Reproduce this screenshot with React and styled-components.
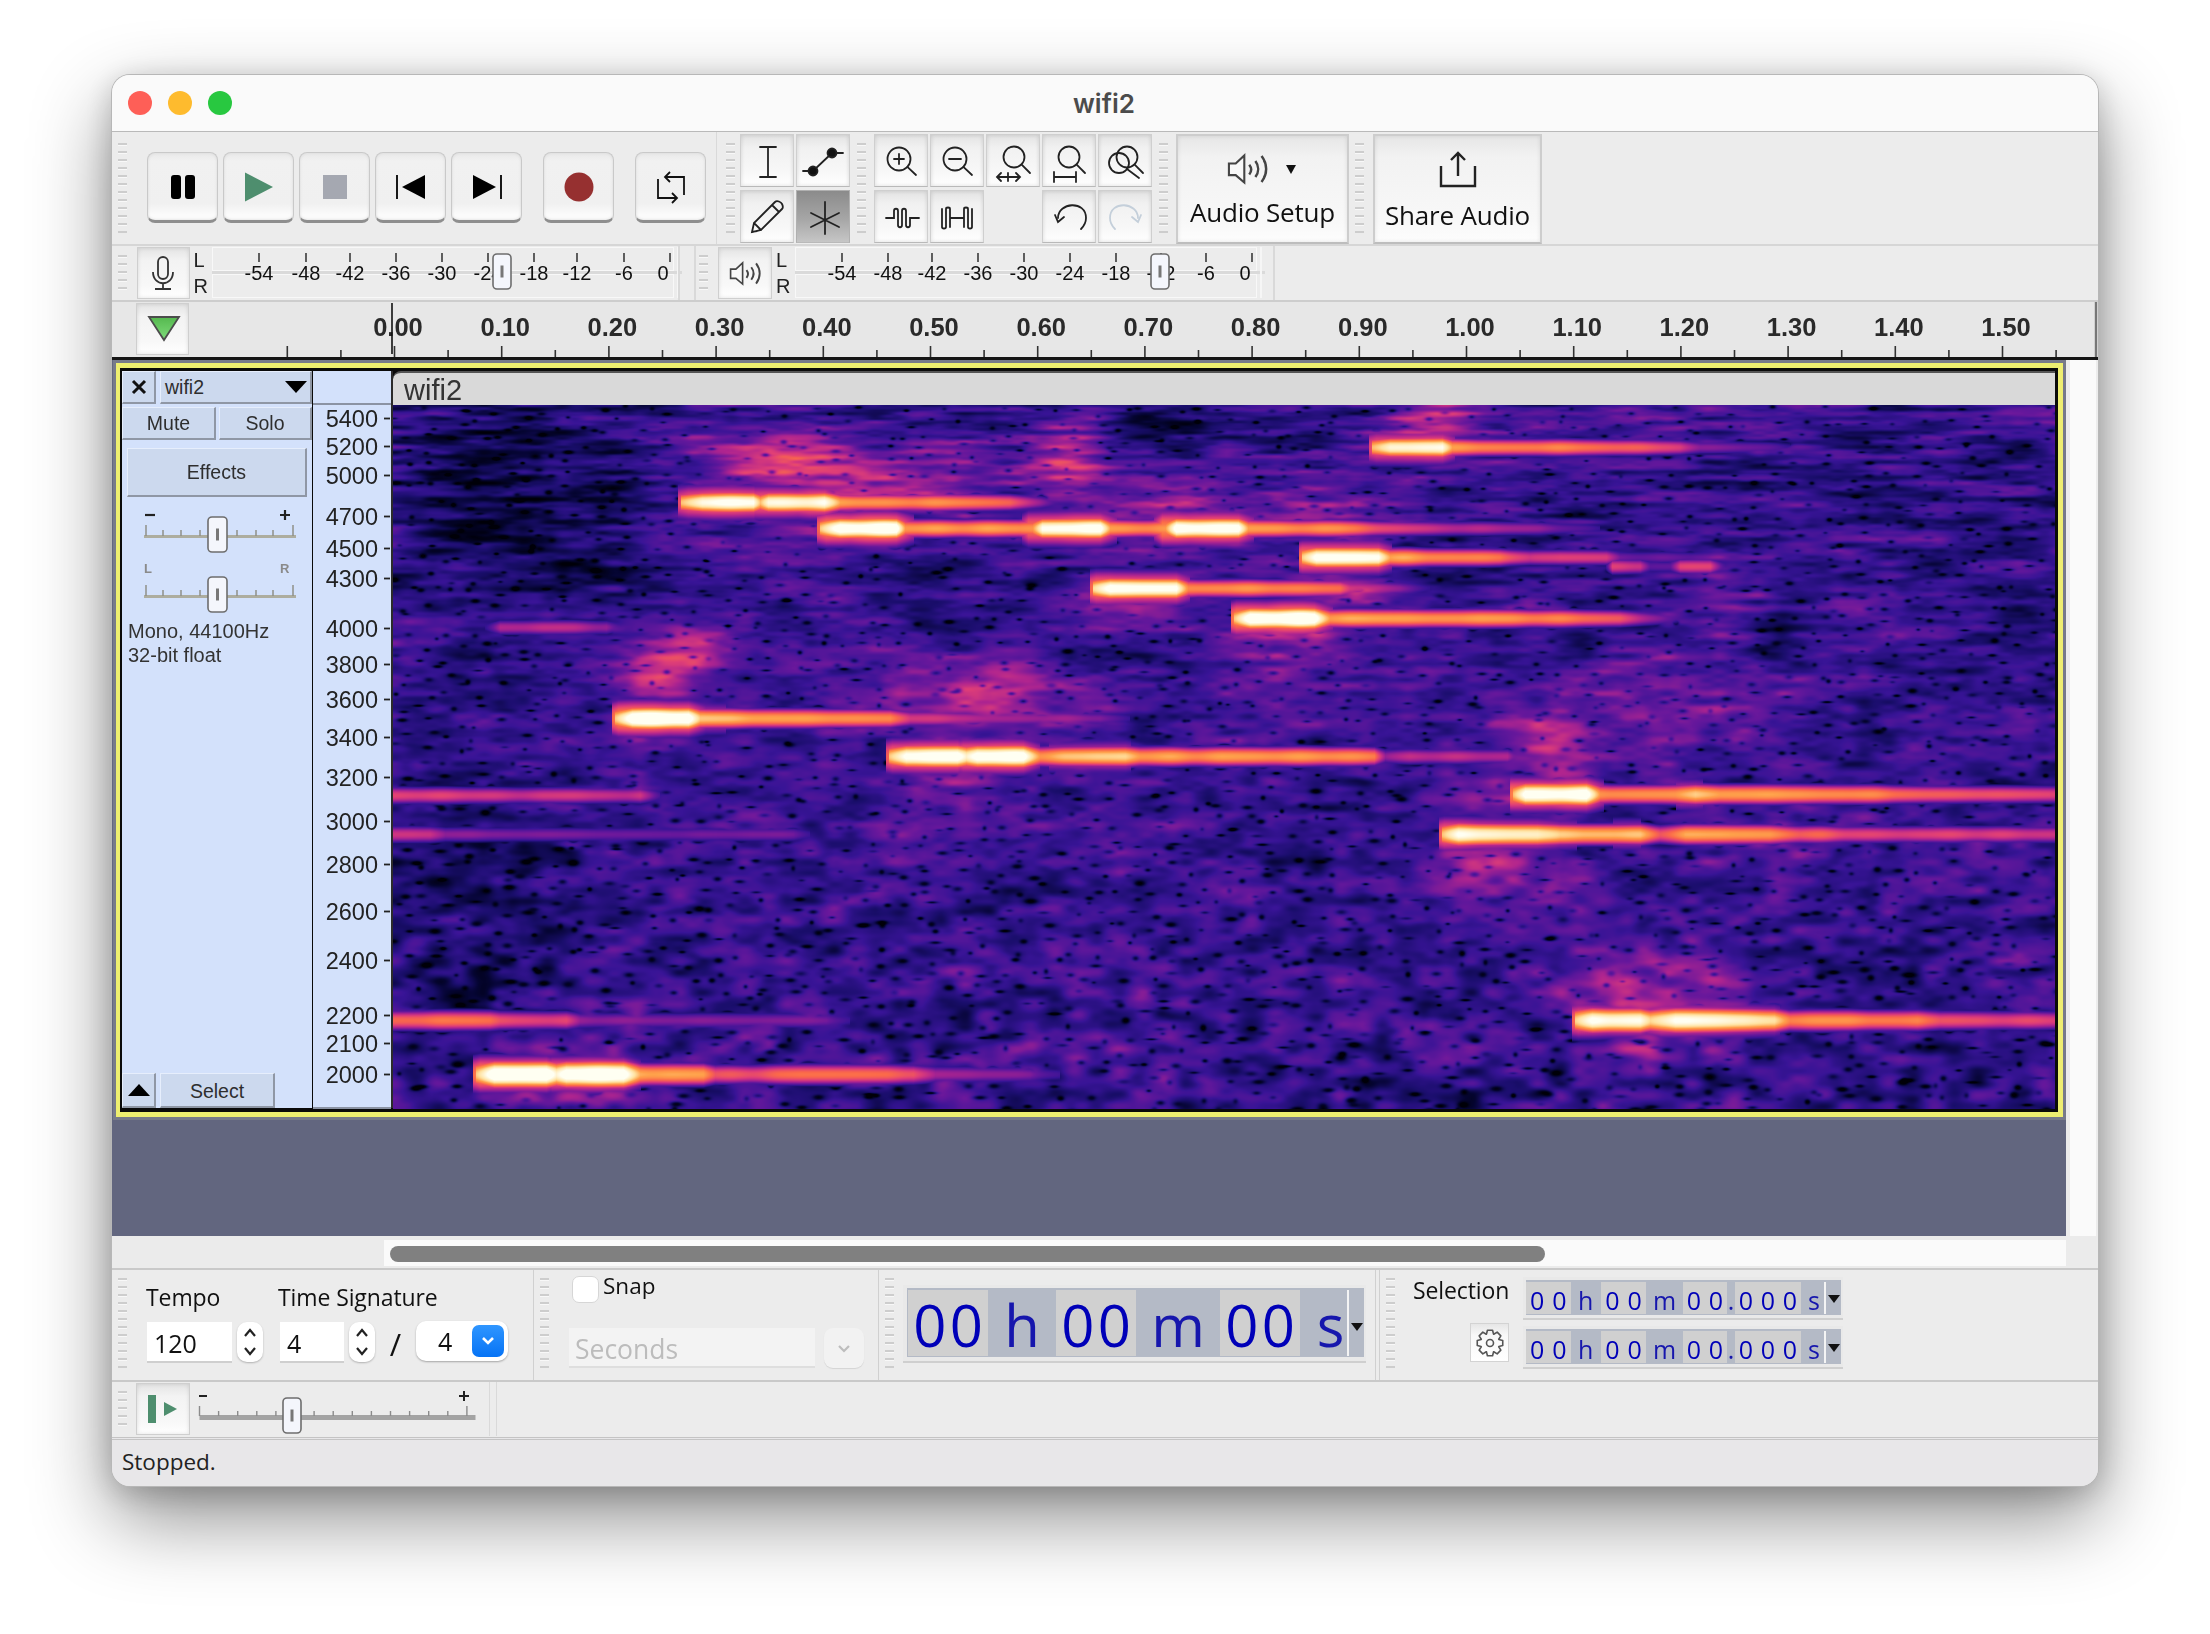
import React, { useEffect, useRef } from "react";
import styled, { createGlobalStyle } from "styled-components";

const Global = createGlobalStyle`
  html, body { margin: 0; background: #fff; }
  #root { width: 2210px; height: 1634px; overflow: hidden; }
  * { box-sizing: border-box; }
`;
const UI = `"Open Sans", "Noto Sans", sans-serif`;
const AR = `"Liberation Sans", Arial, sans-serif`;

const Page = styled.div`width:2210px;height:1634px;padding:75px 112px;background:#fff;`;
const Win = styled.div`
  width:1986px;height:1411px;border-radius:18px;overflow:hidden;display:flex;flex-direction:column;background:#ececec;
  box-shadow:0 0 0 1px #b7b7b7,0 32px 80px rgba(0,0,0,.45),0 6px 30px rgba(0,0,0,.2);
  filter:blur(.4px);
`;
const TitleBar = styled.div`height:57px;flex:none;background:#fafafa;border-bottom:1px solid #b9b9b9;display:grid;grid-template-columns:1fr auto 1fr;align-items:center;padding-left:16px;`;
const Lights = styled.div`display:flex;gap:16px;`;
const Light = styled.span`width:24px;height:24px;border-radius:50%;background:${p=>p.$c};`;
const Title = styled.div`font:600 26px Inter,${AR};color:#4b4b4b;margin-right:18px;`;

const Grip = styled.div`
  width:9px;height:${p=>p.$h}px;margin:${p=>p.$m};flex:none;
  background:repeating-linear-gradient(to bottom,#cdcdcd 0,#cdcdcd 2px,#f8f8f8 2px,#f8f8f8 3px,transparent 3px,transparent 8px);
`;
const Row1 = styled.div`height:112px;flex:none;display:flex;`;
const Transport = styled.div`width:605px;flex:none;display:flex;border-right:1px solid #d9d9d9;`;
const TransportBtns = styled.div`display:flex;gap:5px;margin:20px 0 0 20px;align-items:flex-start;`;
const TBtn = styled.div`
  width:71px;height:71px;flex:none;border-radius:8px;display:flex;align-items:center;justify-content:center;
  margin-left:${p=>p.$ml||0}px;
  background:linear-gradient(#e9e9e9,#f1f1f1 12%,#f0f0f0 75%,#fbfbfb 92%);
  border:1.5px solid #c9c9c9;border-bottom:3px solid #8e8e8e;box-shadow:inset 0 0 3px #d8d8d8;
`;
const ToolGrid = styled.div`display:grid;grid-template-columns:repeat(${p=>p.$cols},54px);grid-auto-rows:53px;gap:3px 2px;margin:2px 0 0 ${p=>p.$ml}px;flex:none;`;
const ToolBtn = styled.div`
  display:flex;align-items:center;justify-content:center;
  background:${p=>p.$on?"linear-gradient(#8b8b8b,#a6a6a6 55%,#c6c6c6)":"linear-gradient(#e3e3e3,#f1f1f1 25%,#f8f8f8 75%,#fff)"};
  border:1.5px solid ${p=>p.$on?"#b0b0b0":"#cfcfcf"};border-bottom-color:#b9b9b9;
  box-shadow:${p=>p.$on?"none":"inset 0 0 4px rgba(0,0,0,.14)"};
`;
const BigBtn = styled.div`
  width:${p=>p.$w}px;height:110px;margin:2px 0 0 ${p=>p.$ml}px;flex:none;display:flex;flex-direction:column;align-items:center;
  background:linear-gradient(#e6e6e6,#f2f2f2 20%,#f8f8f8 80%,#fdfdfd);border:2px solid #cdcdcd;border-bottom-color:#bdbdbd;
  box-shadow:inset 0 0 4px rgba(0,0,0,.1);
  font:400 26px ${UI};color:#111;padding-top:${p=>p.$pt}px;
`;
const BigLabel = styled.div`line-height:30px;margin-top:${p=>p.$mt}px;white-space:nowrap;letter-spacing:-.2px;`;
const IconLine = styled.div`display:flex;align-items:center;gap:17px;margin-left:-2px;`;
const MiniDown = styled.span`width:0;height:0;border:5.5px solid transparent;border-top:9px solid #111;border-bottom:0;`;

const Row2 = styled.div`height:56px;flex:none;display:flex;border-top:2px solid #d6d6d6;`;
const SquareBtn = styled.div`
  width:${p=>p.$w||53}px;height:52px;flex:none;margin:1px 0 0 ${p=>p.$ml}px;display:flex;align-items:center;justify-content:center;
  background:linear-gradient(#e4e4e4,#f3f3f3 25%,#f8f8f8 75%,#fff);border:1.5px solid #cfcfcf;box-shadow:inset 0 0 4px rgba(0,0,0,.12);
`;
const LR = styled.div`width:${p=>p.$w}px;flex:none;height:50px;margin-top:2px;padding-left:4px;display:flex;flex-direction:column;justify-content:space-between;font:20px/24px ${AR};color:#222;`;
const Sep = styled.div`width:${p=>p.$w||2}px;height:54px;flex:none;margin-left:${p=>p.$ml}px;background:#d9d9d9;`;
const Svg = styled.svg`display:block;flex:none;overflow:visible;margin:${p=>p.$m||0};`;
const MeterSlot = styled.div`width:462px;height:51px;flex:none;margin-top:1px;`;

const RulerRow = styled.div`height:60px;flex:none;display:flex;background:#e7e7e7;border-top:2px solid #cdcdcd;border-bottom:3px solid #151515;`;

const TrackZone = styled.div`height:876px;flex:none;display:flex;background:#ececec;`;
const TrackBg = styled.div`width:1954px;flex:none;background:#62667f;padding-left:1px;`;
const TrackStrip = styled.div`width:26px;flex:none;margin-left:4px;background:#fafafa;`;
const FrameGray = styled.div`width:1953px;height:760px;border:3px solid #777a8a;`;
const FrameYellow = styled.div`height:100%;border:solid #eeee70;border-width:5px 5px 5px 4px;`;
const FrameInner = styled.div`height:100%;background:#0a0a0a;padding:3px 3px 4px 2px;display:flex;`;
const Panel = styled.div`width:190px;flex:none;background:#d3e1fb;display:flex;flex-direction:column;color:#333;font-family:${AR};`;
const PanelRow = styled.div`display:flex;margin-top:${p=>p.$mt||0}px;gap:${p=>p.$gap||0}px;flex:none;`;
const PBtn = styled.div`
  width:${p=>p.$w}px;height:${p=>p.$h||33}px;flex:none;display:flex;align-items:center;justify-content:${p=>p.$left?"space-between":"center"};
  padding:${p=>p.$left?"0 3px 0 4px":`${p.$pt||0}px 0 0`};background:#ccd9ee;font-size:19.5px;color:#2e2e2e;
  border:1px solid #e6eefc;border-right:2px solid #8f97a5;border-bottom:2px solid #8f97a5;
`;
const Effects = styled.div`
  width:180px;height:49px;margin:8px 0 0 5px;flex:none;display:flex;align-items:center;justify-content:center;background:#ccd9ee;
  font-size:19.5px;color:#2e2e2e;border:1px solid #e6eefc;border-right:2px solid #8f97a5;border-bottom:2px solid #8f97a5;
`;
const Info = styled.div`font-size:20px;line-height:24px;margin:2px 0 0 6px;color:#333;`;
const Fill = styled.div`flex:1;`;
const VRuler = styled.div`width:80px;flex:none;margin-left:1px;background:#d3e1fb;border-right:2px solid #2b2b2b;`;
const SpecCol = styled.div`flex:1;display:flex;flex-direction:column;`;
const SpecTitle = styled.div`height:34px;flex:none;background:#d9d9d9;border-top:2px solid #555;border-top-left-radius:8px;font:29px/35px ${AR};color:#333;padding-left:11px;`;
const Spec = styled.canvas`display:block;width:1662px;height:704px;`;

const ScrollRow = styled.div`height:32px;flex:none;background:#ebebeb;padding:4px 0 0 272px;`;
const ScrollTrack = styled.div`width:1682px;height:26px;background:#fafafa;padding:6px;`;
const ScrollThumb = styled.div`width:1155px;height:16px;border-radius:8px;background:#808080;`;

const Bottom1 = styled.div`height:112px;flex:none;display:flex;border-top:2px solid #c9c9c9;font-family:${UI};color:#111;`;
const Sect = styled.section`width:${p=>p.$w}px;flex:none;display:flex;border-right:${p=>p.$nob?"0":"1px solid #d0d0d0"};border-left:${p=>p.$bl?"1px solid #d0d0d0":"0"};margin-left:${p=>p.$ml||0}px;`;
const Col = styled.div`display:flex;flex-direction:column;width:${p=>p.$w?p.$w+"px":"auto"};margin:${p=>p.$m||0};flex:none;`;
const Lbl = styled.div`font-size:23px;line-height:28px;white-space:nowrap;letter-spacing:-.1px;margin-top:-1px;`;
const Ctl = styled.div`display:flex;align-items:flex-start;margin-top:11px;font-size:25px;`;
const NumInput = styled.div`width:${p=>p.$w}px;height:41px;margin-left:${p=>p.$ml}px;background:#fff;border-bottom:2px solid #cfcfcf;padding-left:7px;line-height:42px;flex:none;`;
const Stepper = styled.div`width:26px;height:40px;margin-left:5px;border-radius:10px;background:#fff;box-shadow:0 1px 2px rgba(0,0,0,.25);flex:none;display:flex;align-items:center;justify-content:center;`;
const Slash = styled.div`width:41px;text-align:center;font-size:31px;line-height:44px;flex:none;`;
const SelectBox = styled.div`width:92px;height:40px;border-radius:10px;background:#fff;box-shadow:0 1px 2px rgba(0,0,0,.3);display:flex;align-items:center;padding:0 4px 0 22px;justify-content:space-between;margin-top:-1px;`;
const BlueBtn = styled.div`width:32px;height:32px;border-radius:7px;background:linear-gradient(#2f96ff,#0673f5);display:flex;align-items:center;justify-content:center;`;
const SnapRow = styled.div`display:flex;margin:6px 0 0 3px;gap:4px;height:27px;`;
const Check = styled.div`width:27px;height:27px;border-radius:7px;background:#fff;border:1px solid #d6d6d6;`;
const SnapLbl = styled.div`font-size:22.5px;line-height:20px;`;
const SecRow = styled.div`display:flex;margin-top:25px;gap:9px;`;
const SecBox = styled.div`width:246px;height:40px;background:#f3f3f3;border-bottom:2px solid #dedede;color:#bcbcbc;font-size:26.5px;line-height:43px;padding-left:6px;`;
const SecBtn = styled.div`width:40px;height:40px;border-radius:9px;background:#f2f2f2;box-shadow:0 1px 1px rgba(0,0,0,.1);display:flex;align-items:center;justify-content:center;`;

const TimeOuter = styled.div`
  width:${p=>p.$big?463:320}px;height:${p=>p.$big?78:43}px;background:#e9e9e9;flex:none;
  padding:${p=>p.$big?"3px 2px 4px 4px":"3px 2px 3px 3px"};border-bottom:2px solid #cfcfcf;margin:${p=>p.$m||0};
`;
const TimeInner = styled.div`height:100%;background:#b4bac6;display:flex;padding:2px 0 1px ${p=>p.$big?1:0}px;`;
const Cell = styled.div`width:${p=>p.$w}px;flex:none;display:flex;align-items:center;justify-content:center;background:${p=>p.$unit?"transparent":"#d0d0d0"};padding-left:${p=>p.$pad||0}px;padding-top:${p=>p.$big?3:4}px;`;
const Digit = styled.span`display:block;width:${p=>p.$big?36.5:22.3}px;text-align:center;font:${p=>p.$big?500:400} ${p=>p.$big?58:25}px/1 ${UI};color:#0000b8;`;
const Unit = styled.span`font:${p=>p.$big?500:400} ${p=>p.$big?58:25}px/1 ${UI};color:#1616ad;`;
const TimeEdge = styled.div`width:2px;flex:none;background:#f4f4f4;`;
const TimeDrop = styled.div`flex:1;display:flex;justify-content:center;padding-top:${p=>p.$big?33:13}px;`;
const Caret = styled.span`width:0;height:0;border:${p=>p.$big?"6.5px":"6px"} solid transparent;border-top:8px solid #111;border-bottom:0;`;
const GearBtn = styled.div`width:39px;height:39px;margin:19px 0 0 57px;background:linear-gradient(#e6e6e6,#f8f8f8 30%,#fff);border:1.5px solid #d3d3d3;display:flex;align-items:center;justify-content:center;`;

const Bottom2 = styled.div`height:57px;flex:none;display:flex;border-top:2px solid #c9c9c9;`;
const Status = styled.div`height:49px;flex:none;background:#e8e7e9;border-top:3px double #c4c4c4;font:22.5px/44px ${UI};color:#222;padding-left:10px;`;

/* ---------- icons ---------- */
const Pause = () => <svg width="26" height="26"><rect x="1" y="1" width="10" height="24" rx="3" /><rect x="15" y="1" width="10" height="24" rx="3" /></svg>;
const Play = () => <svg width="30" height="30"><path d="M1 0.5 L29 15 L1 29.5Z" fill="#4e8e6e" /></svg>;
const Stop = () => <svg width="24" height="24"><rect width="24" height="24" fill="#a5a8b1" /></svg>;
const SkipStart = () => <svg width="30" height="26"><path d="M1 1V25" stroke="#000" strokeWidth="1.8" /><path d="M29 1V25L6 13Z" /></svg>;
const SkipEnd = () => <svg width="30" height="26"><path d="M29 1V25" stroke="#000" strokeWidth="1.8" /><path d="M1 1V25L24 13Z" /></svg>;
const Rec = () => <svg width="30" height="30"><circle cx="15" cy="15" r="14.5" fill="#963030" /></svg>;
const Loop = () => (
  <svg width="30" height="34" fill="none" stroke="#111" strokeWidth="1.8">
    <path d="M28 25V7H9M14 2 L9 7 L14 12" /><path d="M2 9V28H21M16 23 L21 28 L16 33" />
  </svg>
);
const Mic = () => (
  <svg width="24" height="34" fill="none" stroke="#333" strokeWidth="1.8">
    <rect x="7" y="1" width="10" height="22" rx="5" fill="#f4f4f4" /><path d="M2 16C2 31 22 31 22 16M12 27V32M4 33H20" />
  </svg>
);
const Speaker = ({ w = 34, h = 26 }) => (
  <svg width={w} height={h} viewBox="0 0 34 26" fill="none" stroke="#444" strokeWidth="1.7">
    <path d="M1.5 8.5H7L14 2V24L7 18H1.5Z" fill="#f8f8f8" />
    <path d="M18 9.5C20 12 20 15 18 17.5M23 6.5C26 10.5 26 15.5 23 19.5M28 2.5C33 9 33 17 28 23.5" strokeWidth="2" />
  </svg>
);
const Share = () => (
  <svg width="38" height="38" fill="none" stroke="#222" strokeWidth="2.4">
    <path d="M19 3V26M12 10 L19 3 L26 10" /><path d="M2 16V36H36V16" />
  </svg>
);
const T = ({ children, c = "#222", w = 1.8 }) => <svg width="54" height="53" fill="none" stroke={c} strokeWidth={w} strokeLinecap="round">{children}</svg>;
const Beam = () => <T><path d="M27 13V42M19 13H35M19 43H35" /></T>;
const Env = () => <T><path d="M6 37H16L35 19H46" /><circle cx="16" cy="37" r="4.5" fill="#111" /><circle cx="35" cy="19" r="4.5" fill="#111" /></T>;
const Pencil = () => <T><path d="M11 42 L13 33 L34 12 C36 10 40 12 41 14 C42 16 42 18 41 19 L20 40Z M13 33 L20 40 M31 15 L38 22 M11 42 L16 41" /></T>;
const Multi = () => <T><path d="M28 12V44M14 23 L42 37M42 23 L14 37" /></T>;
const Lens = ({ cx = 24, cy = 25, r = 11.5, to = [41, 41] }) => {
  const d = Math.hypot(to[0] - cx, to[1] - cy);
  const sx = cx + ((to[0] - cx) * r) / d, sy = cy + ((to[1] - cy) * r) / d;
  return <g><circle cx={cx} cy={cy} r={r} /><path d={`M${sx} ${sy}L${to[0]} ${to[1]}`} /></g>;
};
const ZoomIn = () => <T><Lens /><path d="M19 25H29M24 20V30" /></T>;
const ZoomOut = () => <T><Lens /><path d="M18 25H30" /></T>;
const FitSel = () => <T><Lens cx={27} cy={23} r={10.5} to={[43, 39]} /><path d="M10 43H33M14 39 L10 43 L14 47M29 39 L33 43 L29 47M21 39V47" /></T>;
const FitProj = () => <T><Lens cx={26} cy={23} r={10.5} to={[42, 39]} /><path d="M11 43H33M11 38V48M33 38V48" /></T>;
const ZoomTog = () => <T><Lens cx={28} cy={23} r={10.5} to={[44, 39]} /><Lens cx={20} cy={29} r={10} to={[40, 44]} /></T>;
const Trim = () => <T><path d="M11 28H19V21C19 18 23 18 23 21V35C23 38 27 38 27 35V21C27 18 31 18 31 21V35C31 38 35 38 35 35V28H44" /></T>;
const Silence = () => <T><path d="M11 19V37C11 39 15 39 15 37V19C15 17 19 17 19 19V37M19 28H33M33 37V19C33 17 37 17 37 19V37C37 39 41 39 41 37V19" /></T>;
const Undo = () => <T><path d="M15 28C15 12 43 10 43 28C43 33 41 36 38 39" /><path d="M12 25 L15 32 L21 27" /></T>;
const Redo = () => <T c="#c4cfda"><path d="M39 28C39 12 11 10 11 28C11 33 13 36 16 39" /><path d="M42 25 L39 32 L33 27" /></T>;
const Down = ({ c = "#222" }) => <svg width="16" height="9" fill="none" stroke={c} strokeWidth="2.2"><path d="M3 2 L8 7 L13 2" /></svg>;
const StepIcon = () => <svg width="16" height="30" fill="none" stroke="#222" strokeWidth="2.2"><path d="M3 9 L8 3 L13 9M3 21 L8 27 L13 21" /></svg>;
const Gear = () => {
  const pts = [];
  const P = (a, r) => `${(15 + Math.cos(a) * r).toFixed(2)},${(15 + Math.sin(a) * r).toFixed(2)}`;
  for (let i = 0; i < 8; i++) {
    const a = (i / 8) * Math.PI * 2;
    pts.push(P(a - 0.38, 9.5), P(a - 0.2, 13), P(a + 0.2, 13), P(a + 0.38, 9.5));
  }
  return <svg width="30" height="30" fill="none" stroke="#555" strokeWidth="1.6"><polygon points={pts.join(" ")} strokeLinejoin="round" /><circle cx="15" cy="15" r="3.5" /></svg>;
};

/* ---------- meters, rulers, sliders ---------- */
const Thumb = ({ x, y, w = 19, h = 35 }) => (
  <g>
    <rect x={x} y={y} width={w} height={h} rx="4" fill="#f4f6fc" stroke="#6d6d6d" strokeWidth="1.6" />
    <rect x={x + w / 2 - 1.5} y={y + h / 2 - 6} width="3" height="12" fill="#777" />
  </g>
);
const Meter = ({ labels, thumb }) => (
  <Svg width="462" height="51">
    <rect x="0.5" y="0.5" width="461" height="23" fill="none" stroke="#f8f8f8" />
    <rect x="0.5" y="27.5" width="461" height="23" fill="none" stroke="#f8f8f8" />
    <rect x="0" y="24" width="470" height="3" fill="#dadada" />
    <rect x="465" y="0" width="2" height="51" fill="#f6f6f6" />
    {labels.map(([t, x, lx]) => (
      <g key={t}>
        <path d={`M${x} 6V15`} stroke="#222" strokeWidth="1.4" />
        <text x={lx ?? x} y="32.5" textAnchor="middle" fontFamily={AR} fontSize="20" fill="#111">{t}</text>
      </g>
    ))}
    <Thumb x={thumb} y={7} w={18} h={35} />
  </Svg>
);
const RULER_X0 = 394.5 - 189;
const RULER_STEP = 53.6;
const Ruler = () => {
  const marks = [];
  for (let k = -2; k <= 31; k++) {
    const x = RULER_X0 + k * RULER_STEP;
    const major = k % 2 === 0;
    marks.push(<path key={"t" + k} d={`M${x} ${major ? 44 : 48}V55`} stroke="#333" strokeWidth="1.6" />);
    if (major && k >= 0 && k <= 30) {
      marks.push(
        <text key={"l" + k} x={x + 3.5} y="34" textAnchor="middle" fontFamily={AR} fontWeight="700" fontSize="25.5" fill="#2a2a2a">
          {(k * 0.05).toFixed(2)}
        </text>
      );
    }
  }
  return (
    <Svg width="1909" height="55">
      {marks}
      <path d="M203 1V52" stroke="#111" strokeWidth="1.6" />
      <path d="M1907 0V55" stroke="#777" strokeWidth="2.4" />
    </Svg>
  );
};
const FREQS = [[5400,418],[5200,446],[5000,475],[4700,516],[4500,548],[4300,578],[4000,628],[3800,664],[3600,699],[3400,737],[3200,777],[3000,821],[2800,864],[2600,911],[2400,960],[2200,1015],[2100,1043],[2000,1074]];
const FreqRuler = () => (
  <svg width="78" height="738" style={{ display: "block" }}>
    <path d="M0 33H78" stroke="#8b93a3" strokeWidth="2" />
    <path d="M0 737H78" stroke="#8b93a3" strokeWidth="2" />
    {FREQS.map(([f, y]) => (
      <g key={f}>
        <text x="65" y={y - 371 + 8.5} textAnchor="end" fontFamily={AR} fontSize="23.5" fill="#222">{f}</text>
        <path d={`M71 ${y - 371 + 0.5}H77`} stroke="#222" strokeWidth="1.8" />
      </g>
    ))}
  </svg>
);
const SMALL_TICKS = [24, 41, 59, 78, 96, 115, 134, 151, 171];
const PanelSlider = ({ left, right, symbol, m }) => (
  <Svg width="189" height="52" $m={m}>
    <rect x="22" y="30" width="152" height="3" fill="#adad9f" />
    {SMALL_TICKS.map((x, i) => (
      <path key={x} d={`M${x} ${i === 0 || i === 8 ? 20 : 25}V31`} stroke="#8f8f88" strokeWidth="1.5" />
    ))}
    {symbol ? (
      <g stroke="#222" strokeWidth="2.2"><path d="M23 10H33" /><path d="M158 10H168M163 5V15" /></g>
    ) : (
      <g fontFamily={AR} fontSize="13" fontWeight="700" fill="#8a8a8a">
        <text x="22" y="8">{left}</text><text x="158" y="8">{right}</text>
      </g>
    )}
    <Thumb x={86} y={12} w={19} h={35} />
  </Svg>
);
const SpeedSlider = () => {
  const ticks = [];
  for (let i = 0; i <= 14; i++) ticks.push(9.5 + i * 19.1);
  return (
    <Svg width="299" height="55">
      <rect x="9.5" y="33" width="276" height="5" fill="#a3a3a3" />
      {ticks.map((x, i) => <path key={x} d={`M${x} ${i === 0 || i === 14 ? 24 : 29}V34`} stroke="#8b8b8b" strokeWidth="1.4" />)}
      <g stroke="#222" strokeWidth="2"><path d="M9 14H17" /><path d="M269 14H279M274 9V19" /></g>
      <Thumb x={93} y={16} w={18} h={35} />
    </Svg>
  );
};

/* ---------- spectrogram ---------- */
const STOPS = [
  [0, 0, 0, 8], [0.1, 5, 5, 50], [0.2, 26, 14, 108], [0.3, 56, 20, 150], [0.42, 104, 24, 156],
  [0.55, 176, 37, 143], [0.65, 224, 63, 119], [0.75, 251, 106, 74], [0.85, 255, 160, 74], [0.95, 255, 226, 160], [1.05, 255, 255, 242],
];
const TONES = [
  [502,[[678,.3],[690,.85],[702,1.05],[753,1.08],[760,.92],[768,1.05],[824,1.05],[840,.84],[900,.82],[960,.78],[1010,.72],[1040,.5],[1060,.3]]],
  [528,[[817,.3],[826,.88],[840,1.1],[896,1.1],[905,.85],[1020,.82],[1032,.85],[1042,1.08],[1100,1.08],[1110,.85],[1165,.82],[1176,1.08],[1238,1.08],[1248,.85],[1340,.8],[1400,.66],[1440,.58],[1540,.48],[1600,.3]]],
  [557,[[1299,.3],[1306,.88],[1316,1.08],[1378,1.08],[1390,.85],[1500,.78],[1530,.6],[1560,.66],[1606,.64],[1620,.45],[1700,.38],[1750,.3]]],
  [566,[[1606,.3],[1612,.62],[1640,.62],[1650,.4],[1670,.4],[1680,.64],[1710,.64],[1725,.3]]],
  [588,[[1090,.3],[1098,.88],[1110,1.1],[1176,1.1],[1188,.84],[1340,.78],[1350,.65],[1400,.5],[1430,.3]]],
  [618,[[1231,.3],[1238,.88],[1250,1.12],[1314,1.12],[1330,.86],[1470,.82],[1560,.78],[1620,.72],[1650,.5],[1680,.3]]],
  [447,[[1369,.3],[1376,.88],[1390,1.05],[1442,1.05],[1452,.84],[1560,.78],[1680,.66],[1700,.5],[1750,.42],[1790,.3]]],
  [718,[[612,.3],[622,.9],[632,1.12],[688,1.12],[700,.9],[890,.82],[910,.62],[1100,.48],[1130,.3]]],
  [756,[[886,.3],[894,.9],[906,1.1],[957,1.1],[966,1.0],[977,1.1],[1023,1.1],[1040,.86],[1080,.88],[1125,.92],[1140,.84],[1300,.82],[1374,.78],[1385,.5],[1409,.58],[1507,.55],[1520,.3]]],
  [794,[[1510,.3],[1516,.88],[1525,1.1],[1586,1.1],[1600,.84],[1675,.86],[1695,.94],[1720,.86],[1800,.84],[1920,.76],[2055,.68]]],
  [834,[[1439,.3],[1446,.88],[1458,1.06],[1537,1.02],[1560,.9],[1640,.88],[1660,.72],[1685,.84],[1770,.84],[1800,.72],[1900,.66],[2055,.62]]],
  [1020,[[1572,.3],[1580,.88],[1592,1.06],[1640,1.06],[1650,.95],[1675,1.06],[1710,1.02],[1774,.96],[1790,.78],[1808,.8],[1917,.8],[1940,.68],[2055,.66]]],
  [1074,[[473,.3],[482,.9],[494,1.12],[546,1.12],[556,1.0],[566,1.1],[623,1.1],[640,.88],[703,.84],[715,.68],[800,.74],[913,.72],[935,.5],[1030,.48],[1060,.3]]],
  [1020,[[393,.76],[490,.76],[500,.7],[566,.66],[580,.5],[826,.46],[850,.3]]],
  [795,[[393,.68],[500,.62],[640,.6],[660,.3]]],
  [834,[[393,.62],[430,.58],[445,.46],[626,.46],[793,.42],[810,.3]]],
  [627,[[485,.3],[500,.58],[560,.56],[606,.52],[620,.3]]],
];
const BLOBS = [
  [780,470,100,34,.17],[890,480,70,34,.16],[760,540,70,16,.12],[1060,470,45,38,.17],[1200,490,55,32,.14],[1430,420,50,20,.2],
  [1320,520,70,32,.14],[1350,590,50,12,.16],[1300,640,60,45,.14],[1130,610,80,24,.1],[660,675,50,30,.21],[700,640,70,28,.14],
  [670,745,60,15,.1],[950,700,85,34,.17],[1000,680,65,32,.11],[900,775,60,15,.08],[1540,740,50,42,.2],[1500,800,60,20,.15],
  [1490,870,70,28,.17],[1610,990,60,28,.18],[1680,980,75,28,.12],[1640,1050,70,15,.14],[560,1100,100,10,.18],[560,1045,90,16,.14],
  [1650,690,60,55,.07],[1750,655,40,60,.08],[1800,700,200,150,.02],[1300,950,400,100,.02],
  [770,450,60,20,.1],[1075,440,30,40,.1],[1120,505,50,25,.1],[1560,770,30,40,.08],[1000,800,70,40,.05],[1100,700,60,30,.04],
  [500,480,130,90,-.07],[540,520,150,130,-.06],[470,900,90,180,-.06],[1180,430,80,30,-.06],[1770,640,30,30,-.16],[1830,540,250,100,-.02],[1100,760,200,100,.02],[1420,1100,60,20,-.03],[1450,1000,70,25,-.05],
];
const makeNoise = (seed) => {
  const N = 256, t = new Float32Array(N * N);
  let s = seed >>> 0;
  for (let i = 0; i < N * N; i++) {
    s = (s + 0x6d2b79f5) | 0;
    let r = Math.imul(s ^ (s >>> 15), 1 | s);
    r = (r + Math.imul(r ^ (r >>> 7), 61 | r)) ^ r;
    const u = ((r ^ (r >>> 14)) >>> 0) / 4294967296;
    t[i] = u * 2 - 1;
  }
  return (x, y) => {
    const xi = Math.floor(x), yi = Math.floor(y);
    let fx = x - xi, fy = y - yi;
    fx = fx * fx * (3 - 2 * fx); fy = fy * fy * (3 - 2 * fy);
    const x0 = xi & 255, x1 = (xi + 1) & 255, y0 = yi & 255, y1 = (yi + 1) & 255;
    const a = t[y0 * N + x0], b = t[y0 * N + x1], c = t[y1 * N + x0], d = t[y1 * N + x1];
    return a + (b - a) * fx + (c - a) * fy + (a - b - c + d) * fx * fy;
  };
};
function paint(canvas) {
  const W = 1662, H = 704, X0 = 393, Y0 = 405;
  canvas.width = W; canvas.height = H;
  const ctx = canvas.getContext("2d");
  const img = ctx.createImageData(W, H);
  const lut = new Uint8Array(3 * 1201);
  for (let i = 0; i <= 1200; i++) {
    const v = i / 1000;
    let k = 0;
    while (k < STOPS.length - 2 && v > STOPS[k + 1][0]) k++;
    const a = STOPS[k], b = STOPS[k + 1];
    const f = Math.min(1, Math.max(0, (v - a[0]) / (b[0] - a[0])));
    for (let c = 0; c < 3; c++) lut[i * 3 + c] = a[c + 1] + (b[c + 1] - a[c + 1]) * f;
  }
  const base = new Float32Array(W * H).fill(0.29);
  BLOBS.forEach(([cx, cy, rx, ry, amp0]) => {
    const amp = amp0 > 0 ? amp0 * 1.3 : amp0 * 1.4;
    const x0 = Math.max(0, Math.floor(cx - X0 - rx * 3)), x1 = Math.min(W, Math.ceil(cx - X0 + rx * 3));
    const y0 = Math.max(0, Math.floor(cy - Y0 - ry * 3)), y1 = Math.min(H, Math.ceil(cy - Y0 + ry * 3));
    for (let y = y0; y < y1; y++) for (let x = x0; x < x1; x++) {
      const dx = (x + X0 - cx) / rx, dy = (y + Y0 - cy) / ry;
      base[y * W + x] += amp * Math.exp(-(dx * dx + dy * dy));
    }
  });
  const n1 = makeNoise(11), n2 = makeNoise(2929), n3 = makeNoise(47123), co = makeNoise(131071), wob = makeNoise(1730), rnd = makeNoise(999331);

  /* dark specks: jittered grid of small ellipses */
  let ri = 0;
  const R = () => { ri++; return rnd(ri % 256, Math.floor(ri / 256)) * 0.5 + 0.5; };
  for (let gy = 0; gy < H; gy += 13) {
    const t = gy / H;
    for (let gx = 0; gx < W; gx += 24) {
      if (R() < 0.15) continue;
      const cx = gx + R() * 24, cy = gy + R() * 13;
      const rx = 2.2 + R() * (2.5 + t * 2), ry = 1.2 + R() * (0.8 + t * 1.2);
      const depth = 0.12 + R() * 0.16;
      for (let y = Math.max(0, Math.floor(cy - ry * 3)); y < Math.min(H, cy + ry * 3); y++) {
        for (let x = Math.max(0, Math.floor(cx - rx * 3)); x < Math.min(W, cx + rx * 3); x++) {
          const dx = (x - cx) / rx, dy = (y - cy) / ry;
          const e = dx * dx + dy * dy;
          if (e < 9) base[y * W + x] -= depth * Math.exp(-e);
        }
      }
    }
  }

  const bright = new Float32Array(W * H);
  TONES.forEach(([ty, pts0]) => {
    const pts = pts0.map((p) => [...p]);
    if (pts[1][1] > 0.8 && pts[0][1] < 0.4) { pts[1][0] = pts[0][0] + 3; pts[1][1] = 0.92; }
    const row = new Float32Array(W).fill(-1);
    for (let i = 0; i < pts.length - 1; i++) {
      const [xa, va] = pts[i], [xb, vb] = pts[i + 1];
      for (let X = Math.max(xa, X0); X < Math.min(xb, X0 + W); X++) {
        row[X - X0] = va + ((vb - va) * (X - xa)) / (xb - xa) + wob(X / 26, ty) * 0.035;
      }
    }
    /* envelope: jumps up at once with a look-ahead, fades slowly after each peak */
    const peak = new Float32Array(W);
    let prev = -1;
    for (let x = 0; x < W; x++) {
      let m = -1;
      for (let j = x; j <= Math.min(W - 1, x + 14); j += 2) if (row[j] > m) m = row[j];
      prev = m >= prev ? m : Math.max(m, prev - 0.012);
      peak[x] = prev;
    }
    const tn = Math.min(1, Math.max(0, (ty - Y0) / H));
    const scale = 1 - 0.38 * tn;
    for (let dy = -34; dy <= 34; dy++) {
      const y = ty - Y0 + dy;
      if (y < 0 || y >= H) continue;
      for (let x = 0; x < W; x++) {
        const v0 = row[x];
        if (v0 < 0) continue;
        const k = Math.max(0.0046, Math.min(0.0065, 0.006 - (peak[x] - 0.8) * 0.005)) * scale;
        let v = v0 - k * dy * dy;
        if (peak[x] > 0.9) {
          const skirt = peak[x] - 0.3 - 0.0013 * dy * dy;
          if (skirt > v) v = skirt;
        }
        if (v > bright[y * W + x]) bright[y * W + x] = v;
      }
    }
  });
  const d = img.data;
  for (let y = 0; y < H; y++) {
    const t = y / H;
    const yw = (Math.log(4.5 + 7.5 * t) / 7.5) * H;
    for (let x = 0; x < W; x++) {
      const m = n1(x / 44, yw) * (1 - t) + n2(x / 22, yw) * t;
      const m2 = n3(x / 13, yw * 1.7);
      const c = co(x / 70, y / 32);
      let v = base[y * W + x] + m * 0.145 + m2 * 0.04 + c * 0.06;
      const b = bright[y * W + x];
      if (b > 0) {
        const s = 0.025;
        const mx = Math.max(v, b);
        v = mx + s * Math.log(Math.exp((v - mx) / s) + Math.exp((b - mx) / s));
      }
      const idx = Math.max(0, Math.min(1200, Math.round(v * 1000))) * 3;
      const p = (y * W + x) * 4;
      d[p] = lut[idx]; d[p + 1] = lut[idx + 1]; d[p + 2] = lut[idx + 2]; d[p + 3] = 255;
    }
  }
  ctx.putImageData(img, 0, 0);
}
const Spectrogram = () => {
  const ref = useRef(null);
  useEffect(() => { if (ref.current) paint(ref.current); }, []);
  return <Spec ref={ref} />;
};

const TimeBox = ({ big, segs, m }) => (
  <TimeOuter $big={big} $m={m}>
    <TimeInner $big={big}>
      {segs.map((s, i) =>
        s.u !== undefined ? (
          <Cell key={i} $unit $w={s.w} $pad={s.pad} $big={big}><Unit $big={big}>{s.u}</Unit></Cell>
        ) : (
          <Cell key={i} $w={s.w} $big={big}>{s.d.split("").map((c, j) => <Digit key={j} $big={big}>{c}</Digit>)}</Cell>
        )
      )}
      <TimeEdge />
      <TimeDrop $big={big}><Caret $big={big} /></TimeDrop>
    </TimeInner>
  </TimeOuter>
);
const BIG = [{ d: "00", w: 80 }, { u: "h", w: 68 }, { d: "00", w: 80 }, { u: "m", w: 84 }, { d: "00", w: 80 }, { u: "s", w: 47, pad: 14 }];
const SMALL = [{ d: "00", w: 44.5 }, { u: "h", w: 30.5 }, { d: "00", w: 45 }, { u: "m", w: 37 }, { d: "00", w: 44 }, { u: ".", w: 8 }, { d: "000", w: 66 }, { u: "s", w: 23, pad: 3 }];
const M1 = [["-54",47],["-48",94],["-42",138],["-36",184],["-30",230],["-24",276],["-18",322],["-12",365],["-6",412],["0",458,451]];
const M2 = [["-54",47],["-48",93],["-42",137],["-36",183],["-30",229],["-24",275],["-18",321],["-12",366],["-6",411],["0",457,450]];

export default function App() {
  return (
    <>
      <Global />
      <Page>
        <Win>
          <TitleBar>
            <Lights><Light $c="#fe5f57" /><Light $c="#febb2e" /><Light $c="#28c840" /></Lights>
            <Title>wifi2</Title>
          </TitleBar>

          <Row1>
            <Transport>
              <Grip $h={90} $m="11px 0 0 6px" />
              <TransportBtns>
                <TBtn><Pause /></TBtn>
                <TBtn><Play /></TBtn>
                <TBtn><Stop /></TBtn>
                <TBtn><SkipStart /></TBtn>
                <TBtn><SkipEnd /></TBtn>
                <TBtn $ml={16}><Rec /></TBtn>
                <TBtn $ml={16}><Loop /></TBtn>
              </TransportBtns>
            </Transport>
            <Grip $h={90} $m="11px 0 0 9px" />
            <ToolGrid $cols={2} $ml={5}>
              <ToolBtn><Beam /></ToolBtn><ToolBtn><Env /></ToolBtn>
              <ToolBtn><Pencil /></ToolBtn><ToolBtn $on><Multi /></ToolBtn>
            </ToolGrid>
            <Grip $h={90} $m="11px 0 0 7px" />
            <ToolGrid $cols={5} $ml={8}>
              <ToolBtn><ZoomIn /></ToolBtn><ToolBtn><ZoomOut /></ToolBtn><ToolBtn><FitSel /></ToolBtn><ToolBtn><FitProj /></ToolBtn><ToolBtn><ZoomTog /></ToolBtn>
              <ToolBtn><Trim /></ToolBtn><ToolBtn><Silence /></ToolBtn><Fill /><ToolBtn><Undo /></ToolBtn><ToolBtn><Redo /></ToolBtn>
            </ToolGrid>
            <Grip $h={90} $m="11px 0 0 7px" />
            <BigBtn $w={173} $ml={8} $pt={17}>
              <IconLine><Speaker w={42} h={32} /><MiniDown /></IconLine>
              <BigLabel $mt={12}>Audio Setup</BigLabel>
            </BigBtn>
            <Grip $h={90} $m="11px 0 0 6px" />
            <BigBtn $w={169} $ml={9} $pt={14}>
              <Share />
              <BigLabel $mt={12}>Share Audio</BigLabel>
            </BigBtn>
          </Row1>

          <Row2>
            <Grip $h={38} $m="9px 0 0 6px" />
            <SquareBtn $ml={9.5}><Mic /></SquareBtn>
            <LR $w={22.5}><span>L</span><span>R</span></LR>
            <MeterSlot><Meter labels={M1} thumb={281} /></MeterSlot>
            <Sep $w={2} $ml={4} />
            <Sep $w={2} $ml={14} />
            <Grip $h={38} $m="9px 0 0 3px" />
            <SquareBtn $w={54} $ml={10}><Speaker w={33} h={25} /></SquareBtn>
            <LR $w={23}><span>L</span><span>R</span></LR>
            <MeterSlot><Meter labels={M2} thumb={356} /></MeterSlot>
            <Sep $w={2} $ml={16} />
          </Row2>

          <RulerRow>
            <SquareBtn $ml={24}>
              <svg width="36" height="30" style={{ margin: "-2px 0 0 2px" }}><defs><linearGradient id="tri" x1="0" y1="0" x2="0" y2="1"><stop offset="0" stopColor="#55b84f" /><stop offset="1" stopColor="#7fdc7a" /></linearGradient></defs><path d="M3 4H33L18 27Z" fill="url(#tri)" stroke="#4c4c4c" strokeWidth="1.8" /></svg>
            </SquareBtn>
            <Ruler />
          </RulerRow>

          <TrackZone>
            <TrackBg>
              <FrameGray>
                <FrameYellow>
                  <FrameInner>
                    <Panel>
                      <PanelRow $gap={4}>
                        <PBtn $w={34}><svg width="16" height="16" stroke="#111" strokeWidth="3"><path d="M2 2L14 14M14 2L2 14" /></svg></PBtn>
                        <PBtn $w={152} $left>
                          <span>wifi2</span>
                          <svg width="22" height="12"><path d="M0 0H22L11 12Z" /></svg>
                        </PBtn>
                      </PanelRow>
                      <PanelRow $mt={3} $gap={3}>
                        <PBtn $w={94}>Mute</PBtn>
                        <PBtn $w={93}>Solo</PBtn>
                      </PanelRow>
                      <Effects>Effects</Effects>
                      <PanelSlider symbol m="8px 0 0 0" />
                      <PanelSlider left="L" right="R" m="8px 0 0 0" />
                      <Info>Mono, 44100Hz<br />32-bit float</Info>
                      <Fill />
                      <PanelRow $gap={4}>
                        <PBtn $w={34} $h={35}><svg width="22" height="12"><path d="M11 0L22 12H0Z" /></svg></PBtn>
                        <PBtn $w={115} $h={35} $pt={2}>Select</PBtn>
                      </PanelRow>
                    </Panel>
                    <VRuler><FreqRuler /></VRuler>
                    <SpecCol>
                      <SpecTitle>wifi2</SpecTitle>
                      <Spectrogram />
                    </SpecCol>
                  </FrameInner>
                </FrameYellow>
              </FrameGray>
            </TrackBg>
            <TrackStrip />
          </TrackZone>

          <ScrollRow><ScrollTrack><ScrollThumb /></ScrollTrack></ScrollRow>

          <Bottom1>
            <Sect $w={422}>
              <Grip $h={90} $m="8px 0 0 6px" />
              <Col $w={132} $m="14px 0 0 19px">
                <Lbl>Tempo</Lbl>
                <Ctl>
                  <NumInput $w={85} $ml={1}>120</NumInput>
                  <Stepper><StepIcon /></Stepper>
                </Ctl>
              </Col>
              <Col $m="14px 0 0 0">
                <Lbl>Time Signature</Lbl>
                <Ctl>
                  <NumInput $w={64} $ml={2}>4</NumInput>
                  <Stepper><StepIcon /></Stepper>
                  <Slash>/</Slash>
                  <SelectBox>4<BlueBtn><svg width="16" height="10" fill="none" stroke="#fff" strokeWidth="2.6"><path d="M3 2L8 7L13 2" /></svg></BlueBtn></SelectBox>
                </Ctl>
              </Col>
            </Sect>
            <Sect $w={345}>
              <Grip $h={90} $m="8px 0 0 6px" />
              <Col $m="0 0 0 20px">
                <SnapRow><Check /><SnapLbl>Snap</SnapLbl></SnapRow>
                <SecRow><SecBox>Seconds</SecBox><SecBtn><Down c="#bdbdbd" /></SecBtn></SecRow>
              </Col>
            </Sect>
            <Sect $w={497}>
              <Grip $h={90} $m="8px 0 0 6px" />
              <TimeBox big segs={BIG} m="15px 0 0 9px" />
            </Sect>
            <Sect $w={400} $ml={3} $nob $bl>
              <Grip $h={90} $m="8px 0 0 6px" />
              <Col $w={110} $m="7px 0 0 18px">
                <Lbl>Selection</Lbl>
                <GearBtn><Gear /></GearBtn>
              </Col>
              <Col $m="7px 0 0 0">
                <TimeBox segs={SMALL} />
                <TimeBox segs={SMALL} m="6px 0 0 0" />
              </Col>
            </Sect>
          </Bottom1>

          <Bottom2>
            <Grip $h={38} $m="9px 0 0 6px" />
            <SquareBtn $w={54} $ml={9}>
              <svg width="32" height="30" fill="#4e8e6e"><rect x="1" y="1" width="8" height="28" /><path d="M17 8L30 15L17 22Z" /></svg>
            </SquareBtn>
            <SpeedSlider />
            <Sep $w={1} $ml={0} />
            <Sep $w={1} $ml={6} />
          </Bottom2>
          <Status>Stopped.</Status>
        </Win>
      </Page>
    </>
  );
}
